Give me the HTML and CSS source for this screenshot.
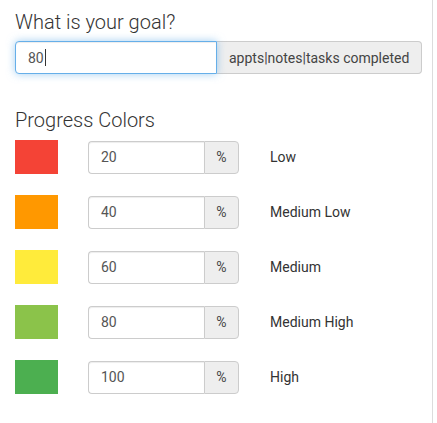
FILE: index.html
```html
<!DOCTYPE html>
<html>
<head>
<meta charset="utf-8">
<link rel="stylesheet" href="styles.css">
</head>
<body>
<div class="panel">
  <h2 class="title">What is your goal?</h2>
  <div class="input-group goal">
    <div class="form-control focused"><span>80</span><span class="caret"></span></div>
    <div class="addon">appts|notes|tasks completed</div>
  </div>

  <h2 class="title second">Progress Colors</h2>
  <div class="rows">
    <div class="row">
      <div class="swatch red"></div>
      <div class="input-group pct">
        <div class="form-control">20</div>
        <div class="addon">%</div>
      </div>
      <div class="label">Low</div>
    </div>
    <div class="row">
      <div class="swatch orange"></div>
      <div class="input-group pct">
        <div class="form-control">40</div>
        <div class="addon">%</div>
      </div>
      <div class="label">Medium Low</div>
    </div>
    <div class="row">
      <div class="swatch yellow"></div>
      <div class="input-group pct">
        <div class="form-control">60</div>
        <div class="addon">%</div>
      </div>
      <div class="label">Medium</div>
    </div>
    <div class="row">
      <div class="swatch lgreen"></div>
      <div class="input-group pct">
        <div class="form-control">80</div>
        <div class="addon">%</div>
      </div>
      <div class="label">Medium High</div>
    </div>
    <div class="row">
      <div class="swatch green"></div>
      <div class="input-group pct">
        <div class="form-control">100</div>
        <div class="addon">%</div>
      </div>
      <div class="label">High</div>
    </div>
  </div>
</div>
</body>
</html>
```
FILE: styles.css
```css
html, body {
  margin: 0;
  padding: 0;
  background: #fff;
}
body {
  font-family: Roboto, "Liberation Sans", sans-serif;
  color: #333;
  font-size: 14px;
}
.panel {
  box-sizing: border-box;
  width: 433px;
  min-height: 423px;
  padding: 8px 11px 0 15px;
  border-right: 1px solid #dcdcdc;
}
.title {
  margin: 0;
  font-size: 20px;
  font-weight: 300;
  line-height: 28px;
  color: #333;
}
.title.second {
  margin-top: 32px;
}
.input-group {
  display: flex;
  height: 33px;
  box-sizing: border-box;
}
.goal {
  margin-top: 5px;
}
.form-control {
  box-sizing: border-box;
  height: 33px;
  border: 1px solid #ccc;
  border-right: 0;
  border-radius: 4px 0 0 4px;
  padding: 0 12px;
  display: flex;
  align-items: center;
  font-size: 14px;
  color: #555;
  background: #fff;
  box-shadow: inset 0 1px 1px rgba(0,0,0,0.075);
}
.goal .form-control {
  width: 202px;
  flex: none;
}
.form-control.focused {
  border: 1px solid #66afe9;
  border-radius: 4px 0 0 4px;
  box-shadow: inset 0 1px 1px rgba(0,0,0,0.075), 0 0 8px rgba(102,175,233,0.6);
  position: relative;
  z-index: 1;
}
.caret {
  display: inline-block;
  width: 1px;
  height: 17px;
  background: #333;
  margin-left: 1px;
}
.addon {
  box-sizing: border-box;
  height: 33px;
  border: 1px solid #ccc;
  border-radius: 0 4px 4px 0;
  background: #eee;
  padding: 0 12px;
  display: flex;
  align-items: center;
  font-size: 14px;
  color: #444;
  white-space: nowrap;
}
.goal .addon {
  flex: 1;
  border-left: 0;
}
.rows {
  margin-top: 6px;
  display: flex;
  flex-direction: column;
  gap: 21px;
}
.row {
  display: flex;
  align-items: center;
  height: 34px;
}
.swatch {
  width: 43px;
  height: 34px;
  flex: none;
}
.red { background: #f44336; }
.orange { background: #ff9800; }
.yellow { background: #ffeb3b; }
.lgreen { background: #8bc34a; }
.green { background: #4caf50; }
.pct {
  margin-left: 30px;
  width: 151px;
  flex: none;
}
.pct .form-control {
  width: 116px;
}
.pct .addon {
  width: 35px;
  justify-content: center;
  padding: 0;
}
.label {
  margin-left: 31px;
  font-size: 14px;
  color: #333;
}
```
